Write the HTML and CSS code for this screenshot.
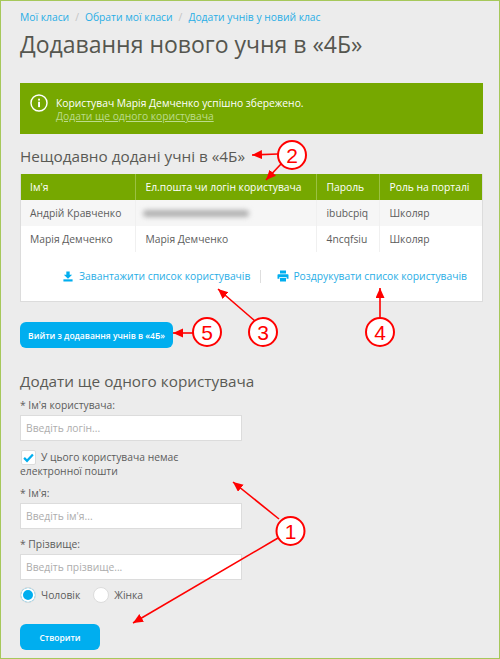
FILE: index.html
```html
<!DOCTYPE html>
<html lang="uk">
<head>
    <meta charset="UTF-8">
    <meta name="viewport" content="width=device-width, initial-scale=1.0">
    <title>Додавання нового учня</title>
    <link rel="stylesheet" href="styles.css">
</head>
<body>
    <main class="page">
        <nav class="breadcrumb">
            <a href="#">Мої класи</a>
            <span class="divider">/</span>
            <a href="#">Обрати мої класи</a>
            <span class="divider">/</span>
            <a href="#">Додати учнів у новий клас</a>
        </nav>
        <h1>Додавання нового учня в «4Б»</h1>

        <div class="alert">
            <svg class="alert-icon" viewBox="0 0 20 20" width="18" height="18">
                <circle cx="10" cy="10" r="8.9" fill="none" stroke="#fff" stroke-width="1.6"/>
                <rect x="9" y="8.6" width="2.1" height="6" fill="#fff"/>
                <rect x="9" y="5.2" width="2.1" height="2.1" fill="#fff"/>
            </svg>
            <div>
                <p>Користувач Марія Демченко успішно збережено.</p>
                <a href="#">Додати ще одного користувача</a>
            </div>
        </div>

        <h2>Нещодавно додані учні в «4Б»</h2>
        <div class="panel">
            <table class="users">
                <thead>
                    <tr>
                        <th class="col-name">Ім'я</th>
                        <th class="col-login">Ел.пошта чи логін користувача</th>
                        <th class="col-pass">Пароль</th>
                        <th>Роль на порталі</th>
                    </tr>
                </thead>
                <tbody>
                    <tr class="odd">
                        <td>Андрій Кравченко</td>
                        <td><div class="smudge"></div></td>
                        <td>ibubcpiq</td>
                        <td>Школяр</td>
                    </tr>
                    <tr>
                        <td>Марія Демченко</td>
                        <td>Марія Демченко</td>
                        <td>4ncqfsiu</td>
                        <td>Школяр</td>
                    </tr>
                </tbody>
            </table>
            <div class="panel-links">
                <a class="link-download" href="#">
                    <svg viewBox="0 0 12 12" width="10" height="11">
                        <path d="M4 0h4v4h3L6 8.6 1 4h3z" fill="#00aeef"/>
                        <rect x="0.5" y="9.4" width="11" height="2.6" fill="#00aeef"/>
                    </svg>
                    Завантажити список користувачів
                </a>
                <span class="links-sep"></span>
                <a class="link-print" href="#">
                    <svg viewBox="0 0 12 12" width="12" height="12">
                        <path d="M3 0.500h6v3H3z" fill="#00aeef"/>
                        <path d="M1.500 4.300h9c.6 0 1 .4 1 1v3.400H9.600V7H2.400v1.700H.5V5.300c0-.6.4-1 1-1z" fill="#00aeef"/>
                        <path d="M3 7.800h6v3.700H3z" fill="#00aeef"/>
                    </svg>
                    Роздрукувати список користувачів
                </a>
            </div>
        </div>

        <button class="btn btn-exit" type="button">Вийти з додавання учнів в «4Б»</button>

        <h2 class="form-title">Додати ще одного користувача</h2>
        <form class="user-form">
            <label class="field-label label-first" for="login">* Ім'я користувача:</label>
            <input class="field" id="login" type="text" placeholder="Введіть логін...">

            <label class="check-row">
                <span class="check-line">
                    <span class="checkbox">
                        <svg viewBox="0 0 12 12" width="11" height="11">
                            <path d="M1.200 6.400l3.200 3.200 6.400-7" fill="none" stroke="#00aeef" stroke-width="2.400"/>
                        </svg>
                    </span>
                    У цього користувача немає
                </span>
                <span class="check-tail">електронної пошти</span>
            </label>

            <label class="field-label" for="firstName">* Ім'я:</label>
            <input class="field" id="firstName" type="text" placeholder="Введіть ім'я...">

            <label class="field-label" for="lastName">* Прізвище:</label>
            <input class="field" id="lastName" type="text" placeholder="Введіть прізвище...">

            <div class="radios">
                <span class="radio radio-on"></span>
                <span class="radio-text">Чоловік</span>
                <span class="radio"></span>
                <span class="radio-text">Жінка</span>
            </div>

            <button class="btn btn-create" type="button">Створити</button>
        </form>

        <!-- red callouts drawn on top of the screenshot -->
        <svg class="callouts" viewBox="0 0 500 659" width="500" height="659">
            <defs>
                <marker id="head" markerUnits="userSpaceOnUse" markerWidth="11" markerHeight="10" refX="10" refY="4.500" orient="auto">
                    <path d="M0 0L10 4.500L0 9z" fill="#f00"/>
                </marker>
            </defs>
            <g class="arrows">
                <path d="M278 154L252 155" marker-end="url(#head)"/>
                <path d="M281 164L266 180" marker-end="url(#head)"/>
                <path d="M255 321L218 289" marker-end="url(#head)"/>
                <path d="M380 318L380 288" marker-end="url(#head)"/>
                <path d="M193 333L173 333" marker-end="url(#head)"/>
                <path d="M279 519L233 482" marker-end="url(#head)"/>
                <path d="M278 538L133 623" marker-end="url(#head)"/>
            </g>
            <g class="rings">
                <circle cx="292" cy="155" r="14"/>
                <circle cx="263" cy="332" r="14"/>
                <circle cx="380" cy="332" r="14"/>
                <circle cx="207" cy="332" r="14"/>
                <circle cx="290.500" cy="531" r="14"/>
            </g>
            <g class="numbers">
                <text x="292" y="162.500">2</text>
                <text x="263" y="339.500">3</text>
                <text x="380" y="339.500">4</text>
                <text x="207" y="339.500">5</text>
                <text x="290.500" y="538.500">1</text>
            </g>
        </svg>
    </main>
</body>
</html>
```

FILE: styles.css
```css
* {
    margin: 0;
    box-sizing: border-box;
}
html, body {
    width: 500px;
    height: 659px;
    overflow: hidden;
}
body {
    font-family: "Open Sans", "Noto Sans", sans-serif;
    font-size: 10.300px;
    color: #5c5c5c;
}
a {
    color: #29aee6;
    text-decoration: none;
}
.page {
    position: relative;
    width: 500px;
    height: 659px;
    padding: 9px 16px 0 19px;
    background-color: #ececec;
    border: 1px solid #a6c85a;
}
.breadcrumb {
    display: flex;
    align-items: center;
    height: 14px;
    gap: 6px;
}
.divider {
    color: #c4c4c4;
}
h1 {
    margin-top: 5px;
    font-size: 23px;
    font-weight: 400;
    line-height: 30px;
    color: #55564f;
}
.alert {
    display: flex;
    align-items: flex-start;
    gap: 8px;
    height: 51px;
    margin-top: 24px;
    padding: 14px 10px 0 10px;
    background-color: #76a800;
    color: #fff;
    line-height: 13px;
}
.alert-icon {
    margin-top: -3px;
    flex: none;
}
.alert a {
    color: #bcdc8c;
    text-decoration: underline;
}
h2 {
    margin-top: 12px;
    font-size: 15.300px;
    font-weight: 400;
    line-height: 21px;
    color: #5a5a55;
}
.panel {
    height: 128px;
    margin-top: 7px;
    background-color: #fff;
    border: 1px solid #dcdcdc;
    border-top: 0;
}
.users {
    width: 100%;
    border-collapse: collapse;
    table-layout: fixed;
}
.users th {
    height: 26px;
    padding: 0 0 0 10px;
    background-color: #76a800;
    color: #fff;
    font-weight: 400;
    text-align: left;
    border-right: 1px solid #9bc143;
}
.users td {
    height: 26px;
    padding: 0 0 0 10px;
    border-right: 1px solid #f0f0f0;
}
.users th:first-child, .users td:first-child {
    padding-left: 9px;
}
.users th:last-child, .users td:last-child {
    border-right: 0;
}
.col-name { width: 114px; }
.col-login { width: 181px; }
.col-pass { width: 63px; }
.odd td {
    background-color: #f6f6f6;
}
.smudge {
    width: 106px;
    height: 7px;
    margin-left: -3px;
    background-color: #b0b0b0;
    border-radius: 4px;
    filter: blur(2.500px);
}
.panel-links {
    display: flex;
    align-items: center;
    justify-content: flex-end;
    height: 24px;
    margin-top: 12px;
    padding-right: 15px;
}
.panel-links a {
    display: flex;
    align-items: center;
}
.link-download {
    gap: 6px;
}
.link-print {
    gap: 4px;
}
.links-sep {
    width: 1px;
    height: 13px;
    margin: 0 16px 0 10px;
    background-color: #dedede;
}
.btn {
    display: block;
    padding: 0;
    border: 0;
    border-radius: 6px;
    background-color: #00aeef;
    color: #fff;
    font-family: inherit;
    font-size: 8.500px;
    font-weight: 600;
    white-space: nowrap;
}
.btn-exit {
    width: 153px;
    height: 26px;
    margin-top: 20px;
}
h2.form-title {
    margin-top: 23px;
}
.user-form {
    display: flex;
    flex-direction: column;
    align-items: flex-start;
}
.field-label {
    margin-top: 7px;
    line-height: 16px;
}
.label-first {
    margin-top: 5px;
}
.field {
    width: 222px;
    height: 26px;
    margin-top: 2px;
    padding: 0 5px;
    background-color: #fff;
    border: 1px solid #dcdcdc;
    font-family: inherit;
    font-size: 10.300px;
    color: #58585a;
}
.field::placeholder {
    color: #adadad;
    opacity: 1;
}
.check-row {
    display: flex;
    flex-direction: column;
    gap: 0;
    margin-top: 9px;
    line-height: 14px;
}
.check-line {
    display: flex;
    align-items: center;
    gap: 5px;
    height: 14px;
}
.checkbox {
    display: flex;
    align-items: center;
    justify-content: center;
    width: 15px;
    height: 15px;
    margin-left: 1px;
    background-color: #fff;
    border: 1px solid #dcdcdc;
    border-radius: 2px;
}
.radios {
    display: flex;
    align-items: center;
    gap: 5px;
    height: 16px;
    margin-top: 7px;
}
.radio {
    width: 16px;
    height: 16px;
    background-color: #fff;
    border: 1px solid #dcdcdc;
    border-radius: 50%;
}
.radio-on {
    background-color: #00aeef;
    box-shadow: inset 0 0 0 2px #fff;
}
.radio-text {
    margin-right: 8px;
}
.btn-create {
    width: 80px;
    height: 26px;
    margin-top: 21px;
}
.callouts {
    position: absolute;
    top: -1px;
    left: -1px;
}
.arrows path {
    fill: none;
    stroke: #f00;
    stroke-width: 1.600;
}
.rings circle {
    fill: #fff;
    stroke: #f00;
    stroke-width: 2;
}
.numbers text {
    font-family: "Liberation Sans", sans-serif;
    font-size: 21px;
    text-anchor: middle;
    fill: #f00;
}
```
